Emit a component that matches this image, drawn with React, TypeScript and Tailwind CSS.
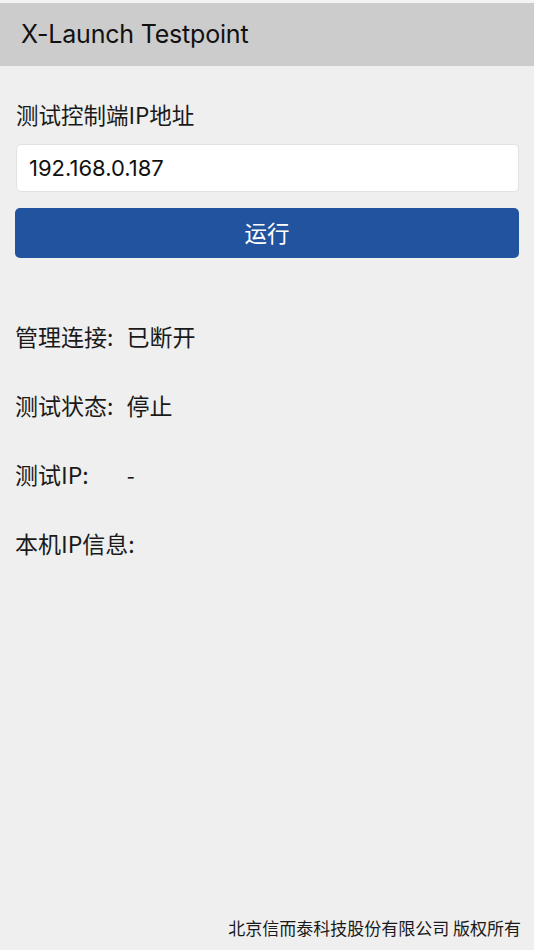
const font = "font-['Noto_Sans_CJK_SC','Noto_Sans',sans-serif]"

function StatusRow({ label, value, gap = "ml-[13px]" }: { label: string; value?: string; gap?: string }) {
  return (
    <div className="flex h-[69px] items-center text-[23px] text-[#1a1a1a]">
      <span>{label}</span>
      {value && <span className={gap}>{value}</span>}
    </div>
  )
}

export default function App() {
  return (
    <div className={`flex h-[950px] w-[534px] flex-col bg-[#efefef] ${font}`}>
      <div className="h-[3px] bg-[#f4f4f4]" />
      <header className="flex h-[63px] items-center bg-[#cccccc] pl-[21px]">
        <h1 className="font-['Inter','Noto_Sans',sans-serif] text-[25px] tracking-[-0.2px] text-[#111]">X-Launch Testpoint</h1>
      </header>

      <main className="flex flex-1 flex-col px-[15px]">
        <label className="mt-[32px] pl-[1px] text-[22.5px] leading-[32px] text-[#1a1a1a]">测试控制端IP地址</label>
        <input
          className="mt-[14px] ml-[1px] h-[48px] w-[503px] rounded-[5px] border border-[#e2e2e2] bg-white px-[12px] font-['Inter',sans-serif] text-[22px] text-[#111] outline-none"
          defaultValue="192.168.0.187"
        />
        <button className="mt-[16px] h-[50px] w-full rounded-[5px] bg-[#22539e] text-[22.5px] text-white">运行</button>

        <div className="mt-[44px] flex flex-col">
          <StatusRow label="管理连接:" value="已断开" />
          <StatusRow label="测试状态:" value="停止" />
          <StatusRow label="测试IP:" value="-" gap="ml-[38px]" />
          <StatusRow label="本机IP信息:" />
        </div>
      </main>

      <footer className="flex justify-end pb-[10px] pr-[13px] text-[17px] text-[#1a1a1a]">北京信而泰科技股份有限公司 版权所有</footer>
    </div>
  )
}
